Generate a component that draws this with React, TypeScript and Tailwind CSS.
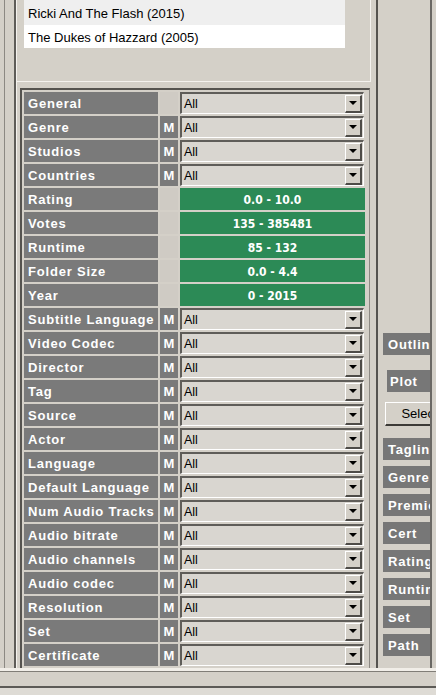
import * as React from 'react';

type Row = { label: string; m?: boolean; range?: string };

const rows: Row[] = [
  { label: 'General' },
  { label: 'Genre', m: true },
  { label: 'Studios', m: true },
  { label: 'Countries', m: true },
  { label: 'Rating', range: '0.0 - 10.0' },
  { label: 'Votes', range: '135 - 385481' },
  { label: 'Runtime', range: '85 - 132' },
  { label: 'Folder Size', range: '0.0 - 4.4' },
  { label: 'Year', range: '0 - 2015' },
  { label: 'Subtitle Language', m: true },
  { label: 'Video Codec', m: true },
  { label: 'Director', m: true },
  { label: 'Tag', m: true },
  { label: 'Source', m: true },
  { label: 'Actor', m: true },
  { label: 'Language', m: true },
  { label: 'Default Language', m: true },
  { label: 'Num Audio Tracks', m: true },
  { label: 'Audio bitrate', m: true },
  { label: 'Audio channels', m: true },
  { label: 'Audio codec', m: true },
  { label: 'Resolution', m: true },
  { label: 'Set', m: true },
  { label: 'Certificate', m: true },
];

const sideBars = ['Tagline', 'Genre', 'Premiere', 'Cert', 'Rating', 'Runtime', 'Set', 'Path'];

function Combo() {
  return (
    <div className="w-[184px] h-[22px] flex items-center bg-[#d9d6d0] border-t-2 border-l-2 border-t-[#5f5d59] border-l-[#5f5d59] border-b border-r border-b-white border-r-white">
      <span className="flex-1 pl-[2px] pt-[2px] text-[12.5px] leading-none text-black">All</span>
      <div className="w-[17px] h-[18px] mr-px flex items-center justify-center bg-[#d4d0c8] border-t border-l border-t-white border-l-white border-b-2 border-r-2 border-b-[#4e4c48] border-r-[#4e4c48]">
        <div className="w-0 h-0 border-l-[4px] border-r-[4px] border-t-[4px] border-l-transparent border-r-transparent border-t-black" />
      </div>
    </div>
  );
}

function FilterRow({ row }: { row: Row }) {
  return (
    <div className="flex h-[22px] mb-[2px] gap-[2px]">
      <div className="w-[134px] bg-[#7a7a7a] flex items-center pl-[4px] pt-[2px] text-white font-bold text-[13px] tracking-[0.8px] whitespace-nowrap">
        {row.label}
      </div>
      <div
        className={
          row.m
            ? 'w-[18px] bg-[#7a7a7a] flex items-center justify-center pt-[2px] text-white font-bold text-[13px]'
            : 'w-[18px] bg-[#cfcbc4]'
        }
      >
        {row.m ? 'M' : ''}
      </div>
      {row.range ? (
        <div className="w-[185px] bg-[#2c8a56] flex items-center justify-center pt-px text-white font-bold text-[12px] font-['DejaVu_Sans_Condensed','DejaVu_Sans',sans-serif]">
          {row.range}
        </div>
      ) : (
        <Combo />
      )}
    </div>
  );
}

export default function App() {
  return (
    <div className="w-[436px] h-[695px] bg-[#d4d0c8] overflow-hidden flex flex-col font-['Liberation_Sans',Arial,sans-serif]">
      <div className="flex h-[668px]">
        {/* outer frame */}
        <div className="w-[14px] pl-[4px]">
          <div className="h-full border-l border-[#8c8983]" />
        </div>

        {/* left panel */}
        <div className="w-[358px] border-l-2 border-[#5e5c58]">
          <div className="h-full border-l border-[#f4f2ee] flex flex-col">
            {/* result list */}
            <div className="w-[354px] h-[82px] pl-[7px] border-r border-b border-[#f4f2ee]">
              <div className="w-[321px] text-[13px] text-black">
                <div className="h-[25px] bg-[#efefef] flex items-center pl-[4px] pt-[3px]">Ricki And The Flash (2015)</div>
                <div className="h-[23px] bg-white flex items-center pl-[4px] pt-[3px]">The Dukes of Hazzard (2005)</div>
              </div>
            </div>

            {/* filter grid */}
            <div className="mt-[6px] ml-[3px] w-[350px] flex-1 border-t-2 border-l-2 border-[#55534f] border-r border-r-[#8c8983] pt-[2px] pl-[2px]">
              {rows.map((r) => (
                <FilterRow key={r.label} row={r} />
              ))}
            </div>
          </div>
        </div>

        {/* right panel */}
        <div className="w-[64px] pl-[4px]">
          <div className="w-[56px] h-full border-l-2 border-r-2 border-l-[#55534f] border-r-[#6a6864] overflow-hidden pl-[5px] pt-[333px]">
            <div className="w-[100px] h-[22px] bg-[#777777] flex items-center pl-[5px] pt-[2px] text-white font-bold text-[13px] tracking-[0.8px]">
              Outline
            </div>
            <div className="ml-[4px] mt-[15px] w-[100px] h-[22px] bg-[#777777] flex items-center pl-[3px] pt-[2px] text-white font-bold text-[13px] tracking-[0.8px]">
              Plot
            </div>
            <div className="ml-[2px] mt-[10px] w-[70px] h-[24px] bg-[#d4d0c8] flex items-center justify-center text-[13px] text-black border-t border-l border-t-white border-l-white border-b-2 border-r-2 border-b-[#3c3a37] border-r-[#6a6864]">
              Select
            </div>
            {sideBars.map((b, i) => (
              <div
                key={b}
                className={`${i === 0 ? 'mt-[12px]' : 'mt-[6px]'} w-[100px] h-[22px] bg-[#777777] flex items-center pl-[5px] pt-[2px] text-white font-bold text-[13px] tracking-[0.8px]`}
              >
                {b}
              </div>
            ))}
          </div>
        </div>
      </div>

      {/* bottom frame lines */}
      <div className="h-[3px] bg-[#f1eee8]" />
      <div className="h-px bg-[#807d77]" />
      <div className="h-[14px]" />
      <div className="h-[2px] bg-[#5c5a56]" />
      <div className="flex-1 bg-[#dedbd5]" />
    </div>
  );
}
